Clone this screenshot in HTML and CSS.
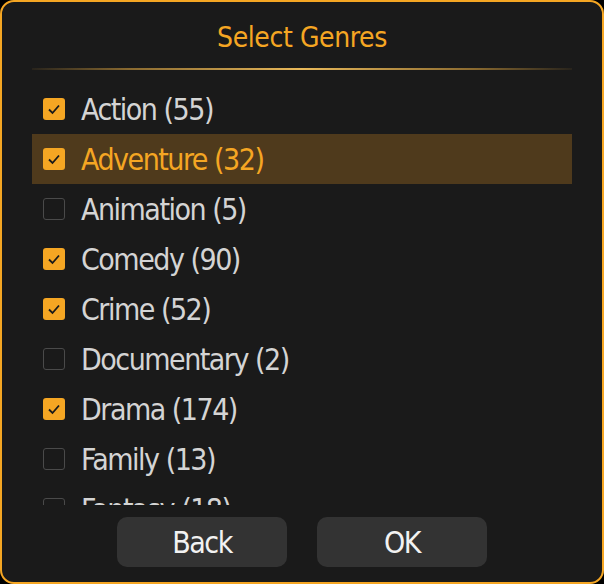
FILE: index.html
```html
<!DOCTYPE html>
<html>
<head>
<meta charset="utf-8">
<link rel="stylesheet" href="styles.css">
</head>
<body>
<div class="dialog">
  <h1 class="title">Select Genres</h1>
  <div class="sep"></div>
  <div class="list">
    <div class="row"><span class="cb on"><svg viewBox="0 0 22 22"><path d="M6 11.5 L9.5 15 L16 7.5"/></svg></span><span class="label">Action (55)</span></div>
    <div class="row focus"><span class="cb on"><svg viewBox="0 0 22 22"><path d="M6 11.5 L9.5 15 L16 7.5"/></svg></span><span class="label">Adventure (32)</span></div>
    <div class="row"><span class="cb"></span><span class="label">Animation (5)</span></div>
    <div class="row"><span class="cb on"><svg viewBox="0 0 22 22"><path d="M6 11.5 L9.5 15 L16 7.5"/></svg></span><span class="label">Comedy (90)</span></div>
    <div class="row"><span class="cb on"><svg viewBox="0 0 22 22"><path d="M6 11.5 L9.5 15 L16 7.5"/></svg></span><span class="label">Crime (52)</span></div>
    <div class="row"><span class="cb"></span><span class="label">Documentary (2)</span></div>
    <div class="row"><span class="cb on"><svg viewBox="0 0 22 22"><path d="M6 11.5 L9.5 15 L16 7.5"/></svg></span><span class="label">Drama (174)</span></div>
    <div class="row"><span class="cb"></span><span class="label">Family (13)</span></div>
    <div class="row"><span class="cb"></span><span class="label">Fantasy (18)</span></div>
  </div>
  <div class="buttons">
    <button class="btn">Back</button>
    <button class="btn">OK</button>
  </div>
</div>
</body>
</html>
```

FILE: styles.css
```css
html, body {
  margin: 0;
  padding: 0;
  background: #000;
}
.dialog {
  box-sizing: border-box;
  width: 604px;
  height: 584px;
  border: 2px solid #f5a623;
  border-radius: 14px;
  background: #1a1a1a;
  display: flex;
  flex-direction: column;
  font-family: "DejaVu Sans Condensed", "DejaVu Sans", sans-serif;
}
.title {
  margin: 16px 0 0;
  height: 40px;
  line-height: 40px;
  text-align: center;
  font-size: 28px;
  font-weight: normal;
  letter-spacing: -0.4px;
  color: #f5a623;
}
.sep {
  margin: 10px 30px 0;
  height: 2px;
  background: linear-gradient(to right, rgba(120,90,40,0.15), #8a6a30 18%, #e9b95a 50%, #8a6a30 82%, rgba(120,90,40,0.15));
}
.list {
  margin: 14px 30px 0;
  height: 421px;
  overflow: hidden;
}
.row {
  height: 50px;
  display: flex;
  align-items: center;
  padding-left: 11px;
  gap: 16px;
}
.row.focus {
  background: #4f3a1c;
}
.cb {
  box-sizing: border-box;
  width: 22px;
  height: 22px;
  border-radius: 3px;
  border: 1.5px solid #4a4a4a;
  flex: none;
  display: flex;
}
.cb.on {
  background: #f5a623;
  border: none;
}
.cb svg {
  width: 22px;
  height: 22px;
  fill: none;
  stroke: #1a1a1a;
  stroke-width: 1.8;
}
.label {
  font-size: 30px;
  letter-spacing: -1.5px;
  color: #d4d4d4;
}
.focus .label {
  color: #f5a623;
}
.buttons {
  margin-top: 12px;
  display: flex;
  justify-content: center;
  gap: 30px;
}
.btn {
  width: 170px;
  height: 50px;
  border: none;
  border-radius: 10px;
  background: #333;
  color: #f2f2f2;
  font-family: inherit;
  font-size: 30px;
  letter-spacing: -1.5px;
  padding: 0;
}
```
